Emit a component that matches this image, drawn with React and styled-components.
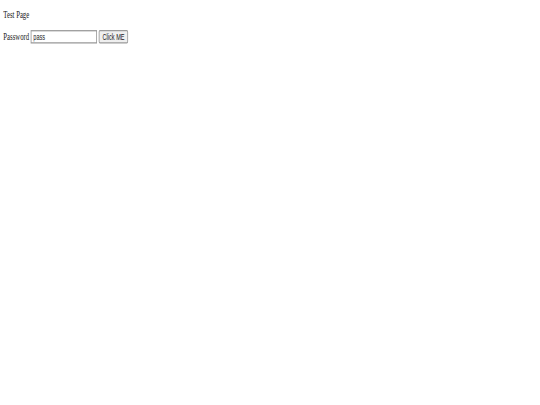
import React from "react";
import styled, { createGlobalStyle } from "styled-components";

const Global = createGlobalStyle`
  html, body { margin: 0; padding: 0; background: #fff; }
  body { overflow: hidden; }
`;

const Page = styled.div`
  width: 1280px;
  padding: 14px 8px 8px;
  box-sizing: border-box;
  font-family: "Liberation Serif", "Times New Roman", serif;
  font-size: 16px;
  color: #1a1a1a;
  transform: scale(0.42, 0.64);
  transform-origin: top left;
`;

const Title = styled.div`
  line-height: normal;
`;

const Form = styled.form`
  margin: 14.5px 0 0;
  display: block;
`;

const Label = styled.label``;

const Input = styled.input`
  box-sizing: border-box;
  width: 158px;
  height: 21px;
  margin: 0;
  padding: 1px 4px;
  border: 2px solid #9a9a9a;
  background: #fff;
  font-family: "Liberation Sans", Arial, sans-serif;
  font-size: 13.3333px;
  color: #1a1a1a;
  vertical-align: baseline;
`;

const Button = styled.button`
  box-sizing: border-box;
  width: 70px;
  height: 21px;
  margin: 0;
  padding: 1px 6px;
  border: 2px solid #9a9a9a;
  border-radius: 3px;
  background: #efefef;
  font-family: "Liberation Sans", Arial, sans-serif;
  font-size: 13.3333px;
  color: #1a1a1a;
`;

export default function App() {
  return (
    <>
      <Global />
      <Page>
        <Title>Test Page</Title>
        <Form onSubmit={(e) => e.preventDefault()}>
          <Label>Password</Label>{" "}
          <Input type="text" defaultValue="pass" />{" "}
          <Button type="button">Click ME</Button>
        </Form>
      </Page>
    </>
  );
}
